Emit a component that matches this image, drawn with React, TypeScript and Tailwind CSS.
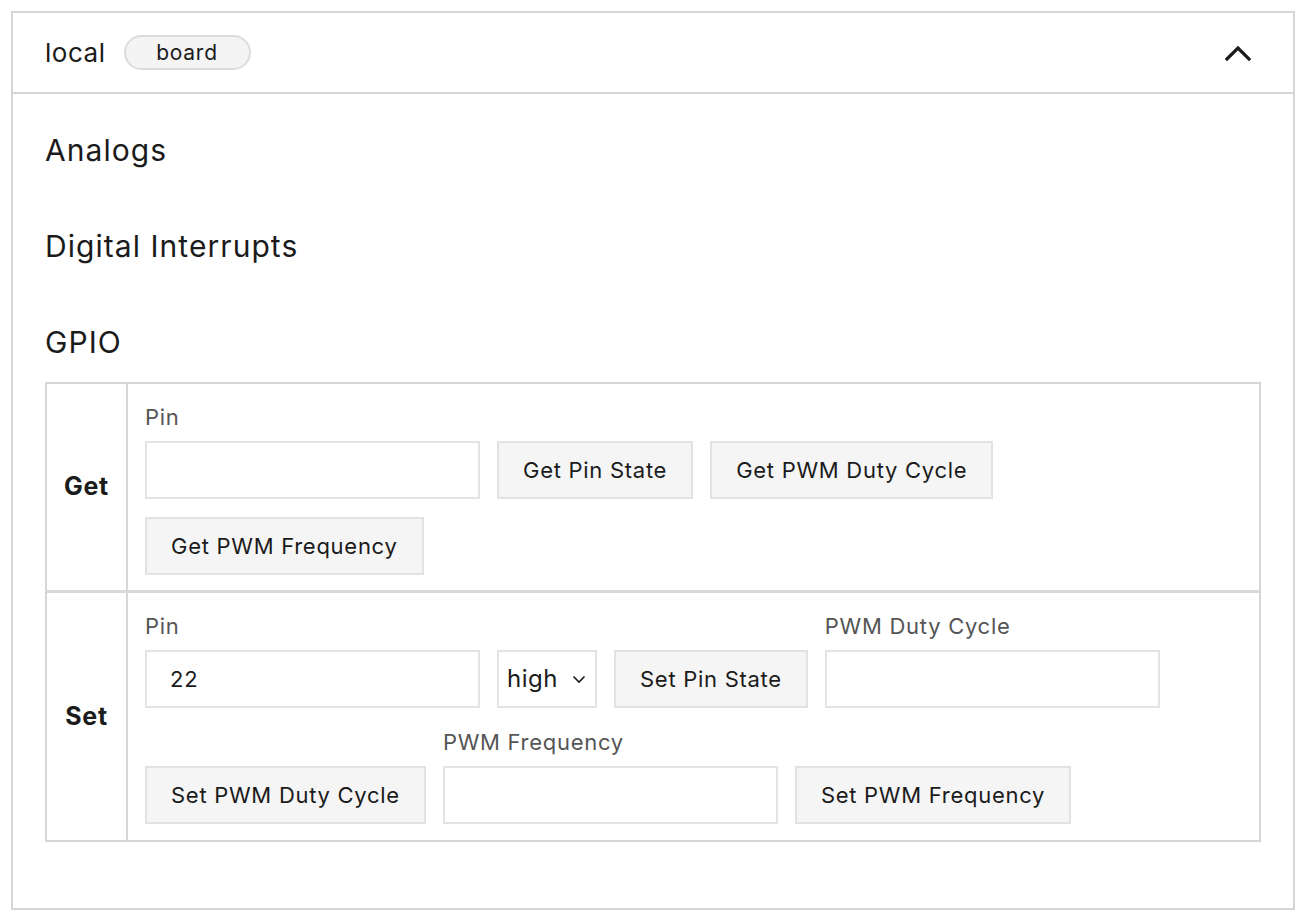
import React from 'react'

const btnCls = "h-[58px] shrink-0 border-2 border-[#e2e2e2] bg-[#f5f5f5] px-[24px] text-[22px] text-[#1b1b1b]"
const inputCls = "h-[58px] w-[335px] border-2 border-[#e4e4e4] bg-white px-[23px] text-[22px] text-[#1b1b1b] outline-none"
const labelCls = "mb-3 block text-[22px] leading-6 text-[#555]"
const headingCls = "h-[36px] text-[30px] leading-[36px] tracking-[0.035em]"

function Labeled({ label, children }: { label: string; children: React.ReactNode }) {
  return (
    <div className="mt-1 flex flex-col">
      <label className={labelCls}>{label}</label>
      {children}
    </div>
  )
}

function GpioRow({ label, children, last }: { label: string; children: React.ReactNode; last?: boolean }) {
  return (
    <div className={`flex ${last ? '' : 'border-b-[3px] border-[#d9d9d9]'}`}>
      <div className="flex w-[81px] shrink-0 items-center justify-center border-r-2 border-[#d6d6d6] text-[25px] font-bold">
        {label}
      </div>
      <div className={`flex flex-1 flex-wrap items-end gap-x-[17px] gap-y-[18px] pt-[17px] pl-[17px] pr-4 ${last ? 'pb-4' : 'pb-[15px]'}`}>
        {children}
      </div>
    </div>
  )
}

export default function App() {
  return (
    <div className="min-h-[922px] bg-white p-[11px] font-['Inter','Open_Sans',sans-serif] tracking-[0.045em] text-[#1b1b1b]">
      <div className="border-2 border-[#d6d6d6]">
        {/* header */}
        <div className="flex h-[81px] items-center justify-between border-b-2 border-[#d6d6d6] pl-[32px] pr-[41px]">
          <div className="flex items-center gap-[18px]">
            <span className="text-[26px] leading-none tracking-[0.02em]">local</span>
            <span className="flex h-[35px] w-[127px] items-center justify-center rounded-full border-2 border-[#dcdcdc] bg-[#f4f4f4] text-[21px]">
              board
            </span>
          </div>
          <svg width="28" height="18" viewBox="0 0 28 18" fill="none">
            <polyline points="3,15 14,4 25,15" stroke="#1b1b1b" strokeWidth="3.2" strokeLinecap="square" />
          </svg>
        </div>

        {/* body */}
        <div className="px-[32px] pt-[38px] pb-[66px]">
          <h2 className={`mb-[60px] ${headingCls}`}>Analogs</h2>
          <h2 className={`mb-[60px] ${headingCls}`}>Digital Interrupts</h2>
          <h2 className={`mb-[22px] ${headingCls}`}>GPIO</h2>

          <div className="border-2 border-[#d6d6d6]">
            <GpioRow label="Get">
              <Labeled label="Pin">
                <input className={inputCls} />
              </Labeled>
              <button className={btnCls}>Get Pin State</button>
              <button className={btnCls}>Get PWM Duty Cycle</button>
              <button className={btnCls}>Get PWM Frequency</button>
            </GpioRow>
            <GpioRow label="Set" last>
              <Labeled label="Pin">
                <input className={inputCls} defaultValue="22" />
              </Labeled>
              <div className="relative h-[58px] w-[100px] shrink-0">
                <select className="h-full w-full appearance-none border-2 border-[#e4e4e4] bg-white pl-[8px] text-[24px] tracking-[0.02em] text-[#1b1b1b] outline-none">
                  <option>high</option>
                  <option>low</option>
                </select>
                <svg className="pointer-events-none absolute right-[11px] top-[25px]" width="14" height="9" viewBox="0 0 14 9" fill="none">
                  <polyline points="1.5,1.5 7,7 12.5,1.5" stroke="#1b1b1b" strokeWidth="1.6" />
                </svg>
              </div>
              <button className={btnCls}>Set Pin State</button>
              <Labeled label="PWM Duty Cycle">
                <input className={inputCls} />
              </Labeled>
              <button className={btnCls}>Set PWM Duty Cycle</button>
              <Labeled label="PWM Frequency">
                <input className={inputCls} />
              </Labeled>
              <button className={btnCls}>Set PWM Frequency</button>
            </GpioRow>
          </div>
        </div>
      </div>
    </div>
  )
}
